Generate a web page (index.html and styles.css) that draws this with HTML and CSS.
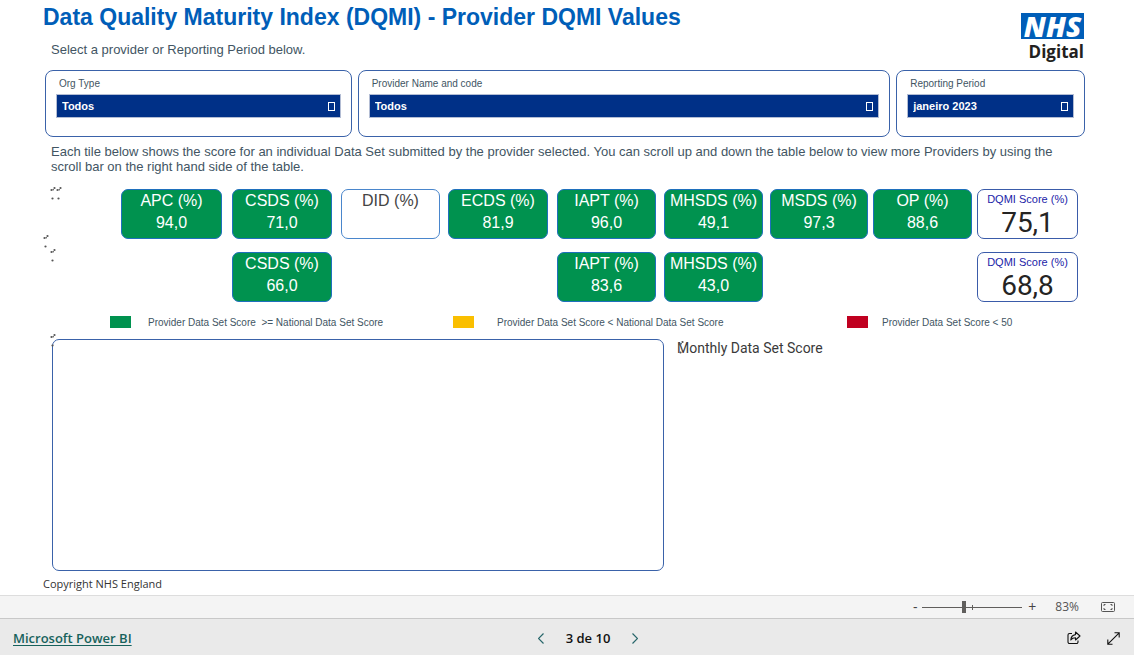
FILE: index.html
```html
<!DOCTYPE html>
<html lang="en">
<head>
<meta charset="utf-8">
<meta name="viewport" content="width=device-width, initial-scale=1">
<title>Data Quality Maturity Index</title>
<link rel="stylesheet" href="styles.css">
</head>
<body>
<main class="report">
  <header class="head">
    <div class="head-text">
      <h1 class="title">Data Quality Maturity Index (DQMI) - Provider DQMI Values</h1>
      <p class="text">Select a provider or Reporting Period below.</p>
    </div>
    <div class="logo"><span class="logo-nhs">NHS</span><span class="logo-name">Digital</span></div>
  </header>

  <section class="filters">
    <div class="filter">
      <label class="filter-label" for="org">Org Type</label>
      <div class="select-wrap"><select class="select" id="org"><option>Todos</option></select></div>
    </div>
    <div class="filter">
      <label class="filter-label" for="provider">Provider Name and code</label>
      <div class="select-wrap"><select class="select" id="provider"><option>Todos</option></select></div>
    </div>
    <div class="filter">
      <label class="filter-label" for="period">Reporting Period</label>
      <div class="select-wrap"><select class="select" id="period"><option>janeiro 2023</option></select></div>
    </div>
  </section>

  <p class="text intro">Each tile below shows the score for an individual Data Set submitted by the provider selected. You can scroll up and down the table below to view more Providers by using the scroll bar on the right hand side of the table.</p>

  <section class="scores">
    <svg class="dots" width="26" height="80" viewBox="0 0 26 80" aria-hidden="true">
      <defs>
        <g id="mark" fill="#555"><circle cx="1.5" cy="4" r="1.1"/><circle cx="3.2" cy="3.700" r=".8"/><circle cx="4.5" cy="2" r="1.1"/><circle cx="2.5" cy="12.500" r="1.1"/></g>
      </defs>
      <use href="#mark" x="8" y="0"/><use href="#mark" x="14" y="0"/>
      <use href="#mark" x="1" y="48"/><use href="#mark" x="8" y="62"/>
    </svg>
    <div class="tile c1"><span>APC (%)</span><span>94,0</span></div>
    <div class="tile c2"><span>CSDS (%)</span><span>71,0</span></div>
    <div class="tile tile-empty c3"><span>DID (%)</span></div>
    <div class="tile c4"><span>ECDS (%)</span><span>81,9</span></div>
    <div class="tile c5"><span>IAPT (%)</span><span>96,0</span></div>
    <div class="tile c6"><span>MHSDS (%)</span><span>49,1</span></div>
    <div class="tile c7"><span>MSDS (%)</span><span>97,3</span></div>
    <div class="tile c8"><span>OP (%)</span><span>88,6</span></div>
    <div class="total c9"><span class="total-label">DQMI Score (%)</span><span class="total-value">75,1</span></div>
    <div class="tile c2"><span>CSDS (%)</span><span>66,0</span></div>
    <div class="tile c5"><span>IAPT (%)</span><span>83,6</span></div>
    <div class="tile c6"><span>MHSDS (%)</span><span>43,0</span></div>
    <div class="total c9"><span class="total-label">DQMI Score (%)</span><span class="total-value">68,8</span></div>
  </section>

  <ul class="legend">
    <li class="key"><span class="swatch green"></span><span class="key-text">Provider Data Set Score&nbsp; &gt;= National Data Set Score</span></li>
    <li class="key"><span class="swatch amber"></span><span class="key-text">Provider Data Set Score &lt; National Data Set Score</span></li>
    <li class="key"><span class="swatch red"></span><span class="key-text">Provider Data Set Score &lt; 50</span></li>
  </ul>

  <section class="details">
    <div class="panel">
      <svg class="panel-dots" width="8" height="16" viewBox="0 0 8 16" aria-hidden="true"><use href="#mark" x="1" y="0"/></svg>
    </div>
    <div class="chart">
      <h2 class="chart-title">Monthly Data Set Score</h2>
      <svg class="chart-dots" width="8" height="16" viewBox="0 0 8 16" aria-hidden="true"><use href="#mark" x="1" y="0"/></svg>
    </div>
  </section>
  <p class="copyright">Copyright NHS England</p>
</main>

<div class="zoombar">
  <button class="zoom-step" aria-label="Zoom out">-</button>
  <input class="slider" type="range" min="0" max="100" value="41" aria-label="Zoom">
  <button class="zoom-step" aria-label="Zoom in">+</button>
  <span class="zoom-value">83%</span>
  <button class="icon-button" aria-label="Fit to page">
    <svg width="14" height="10" viewBox="0 0 14 10" fill="none" stroke="#555"><rect x=".5" y=".5" width="13" height="9" rx="1"/><path d="M3 4V2.500h1.500M9.500 2.500H11V4M11 6v1.500H9.500M4.500 7.500H3V6"/></svg>
  </button>
</div>

<footer class="footer">
  <a class="brand" href="#">Microsoft Power BI</a>
  <nav class="pager">
    <button class="icon-button" aria-label="Previous page"><svg width="6" height="11" viewBox="0 0 6 11" fill="none" stroke="#27666a" stroke-width="1.200"><path d="M5.500.5l-5 5 5 5"/></svg></button>
    <span>3 de 10</span>
    <button class="icon-button" aria-label="Next page"><svg width="6" height="11" viewBox="0 0 6 11" fill="none" stroke="#27666a" stroke-width="1.200"><path d="M.5.5l5 5-5 5"/></svg></button>
  </nav>
  <div class="actions">
    <button class="icon-button" aria-label="Share"><svg width="14" height="14" viewBox="0 0 14 14" fill="none" stroke="#111" stroke-width="1.100"><path d="M5 2.500H2.500a1.500 1.500 0 0 0-1.500 1.500v7a1.500 1.500 0 0 0 1.500 1.500h7a1.500 1.500 0 0 0 1.500-1.500V9.500"/><path d="M8.500 1l4.500 4-4.500 4V6.800C6.300 6.800 4.900 7.500 3.800 9c.2-3 1.900-5 4.700-5.400z" stroke-linejoin="round"/></svg></button>
    <button class="icon-button" aria-label="Full screen"><svg width="13" height="13" viewBox="0 0 13 13" fill="none" stroke="#111" stroke-width="1.100"><path d="M.8 12.200L12.200.8M7.500.8h4.700v4.700M.8 7.500v4.700h4.700"/></svg></button>
  </div>
</footer>
</body>
</html>
```
FILE: styles.css
```css
* { box-sizing: border-box; }

body {
  margin: 0;
  min-height: 100vh;
  display: flex;
  flex-direction: column;
  background: #fff;
  color: #425563;
  font-family: "Liberation Sans", Arial, sans-serif;
}

h1, h2, p, ul { margin: 0; padding: 0; }

button { border: 0; padding: 0; background: none; font: inherit; color: inherit; }

.report {
  flex: 1;
  display: flex;
  flex-direction: column;
  padding: 4px 49px 3px 43px;
}

.head { display: flex; justify-content: space-between; height: 66px; }

.title { color: #005eb8; font-size: 23px; line-height: 26px; }

.text { font-size: 13px; line-height: 15px; padding-left: 8px; }

.head .text { margin-top: 12px; }

.logo { display: flex; flex-direction: column; align-items: flex-end; padding: 9px 1px 0 0; }

.logo-nhs {
  width: 63px;
  height: 26px;
  background: #005eb8;
  color: #fff;
  font: italic 800 28px/26px "Open Sans", sans-serif;
  text-align: center;
}

.logo-name { color: #231f20; font: 700 17px/26px "Open Sans", sans-serif; }

.filters { display: grid; grid-template-columns: 307fr 533fr 189fr; gap: 6px; padding-left: 2px; }

.filter { border: 1px solid #3a62a9; border-radius: 8px; padding: 7px 10px 18px; height: 67px; }

.filter-label { display: block; padding-left: 3px; font-size: 10px; line-height: 12px; }

.select-wrap { position: relative; margin-top: 4px; }

.select-wrap::after {
  content: "";
  box-sizing: border-box;
  position: absolute;
  right: 6px;
  top: 8px;
  width: 7px;
  height: 9px;
  border: 1px solid #fff;
  pointer-events: none;
}

.select {
  appearance: none;
  display: block;
  width: 100%;
  height: 24px;
  padding: 0 20px 0 5px;
  border: 1px solid #b3bdd4;
  border-radius: 0;
  background: #003087;
  color: #fff;
  font: bold 11px "Liberation Sans", Arial, sans-serif;
}

.intro { margin-top: 7px; }

.scores {
  position: relative;
  display: grid;
  grid-template-columns: 101fr 10fr 100fr 9fr 99fr 8fr 100fr 9fr 99fr 8fr 99fr 7fr 98fr 5fr 99fr 5fr 101fr;
  row-gap: 13px;
  margin: 15px 7px 0 78px;
}

/* Even tracks are the spaces between tiles. */
.c1 { grid-column: 1; }
.c2 { grid-column: 3; }
.c3 { grid-column: 5; }
.c4 { grid-column: 7; }
.c5 { grid-column: 9; }
.c6 { grid-column: 11; }
.c7 { grid-column: 13; }
.c8 { grid-column: 15; }
.c9 { grid-column: 17; }

.dots { position: absolute; left: -79px; top: -3px; }

.tile, .total {
  display: flex;
  flex-direction: column;
  align-items: center;
  height: 50px;
  border: 1px solid #1f70bd;
  border-radius: 7px;
}

.tile { background: #00924f; color: #fff; font-size: 16px; line-height: 22px; }

.tile-empty { background: #fff; color: #444; border-color: #4a86cc; }

.total { border-color: #3a5ba9; white-space: nowrap; }

.total-label { color: #1c24a8; font-size: 11px; line-height: 18px; }

.total-value { color: #252423; font: 28px/30px Roboto, sans-serif; }

.legend {
  display: grid;
  grid-template-columns: 343fr 394fr 238fr;
  margin: 11px 0 0 67px;
  list-style: none;
  font-size: 10px;
  line-height: 16px;
}

.key { display: flex; align-items: center; gap: 17px; }

.key:nth-child(2) { gap: 23px; }

.key:nth-child(3) { gap: 14px; }

.key-text { padding-top: 2px; }

.swatch { width: 21px; height: 12px; }

.green { background: #00924f; }
.amber { background: #fabf00; }
.red { background: #c00020; }

.details {
  flex: 1;
  display: grid;
  grid-template-columns: 612fr 408fr;
  gap: 13px;
  margin: 8px 0 0 9px;
}

.panel { position: relative; border: 1px solid #3a62a9; border-radius: 7px; }

.panel-dots { position: absolute; left: -4px; top: -7px; }

.chart { position: relative; }

.chart-title { color: #3a3a3a; font: 14px/18px Roboto, sans-serif; }

.chart-dots { position: absolute; left: 0; top: 1px; }

.copyright { margin-top: 5px; color: #333; font: 11px/16px "Open Sans", sans-serif; }

.zoombar {
  display: flex;
  align-items: center;
  justify-content: flex-end;
  height: 23px;
  padding-right: 19px;
  border-top: 1px solid #ddd;
  background: #f4f4f4;
  color: #555;
  font: 12px/16px "Open Sans", sans-serif;
}

.zoom-step { width: 14px; font-size: 14px; line-height: 16px; color: #444; }

.slider {
  appearance: none;
  width: 100px;
  height: 12px;
  margin: 0 3px 0 0;
  background:
    linear-gradient(#605e5c, #605e5c) 50% 50% / 1px 5px no-repeat,
    linear-gradient(#605e5c, #605e5c) 0 50% / 100% 1px no-repeat;
}

.slider::-webkit-slider-thumb { appearance: none; width: 4px; height: 12px; background: #605e5c; }

.slider::-moz-range-thumb { width: 4px; height: 12px; border: 0; border-radius: 0; background: #605e5c; }

.zoom-value { margin: 0 22px 0 16px; }

.icon-button { display: flex; align-items: center; }

.footer {
  display: grid;
  grid-template-columns: 1fr auto 1fr;
  align-items: center;
  height: 37px;
  padding: 2px 14px 0 13px;
  border-top: 1px solid #c8c8c8;
  background: #eaeaea;
  color: #111;
  font: 600 13px/20px "Open Sans", sans-serif;
}

.brand { color: #17625c; font-size: 13px; text-underline-offset: 2px; }

.pager { display: flex; gap: 22px; padding-left: 43px; }

.actions { display: flex; justify-content: flex-end; gap: 26px; }
```
